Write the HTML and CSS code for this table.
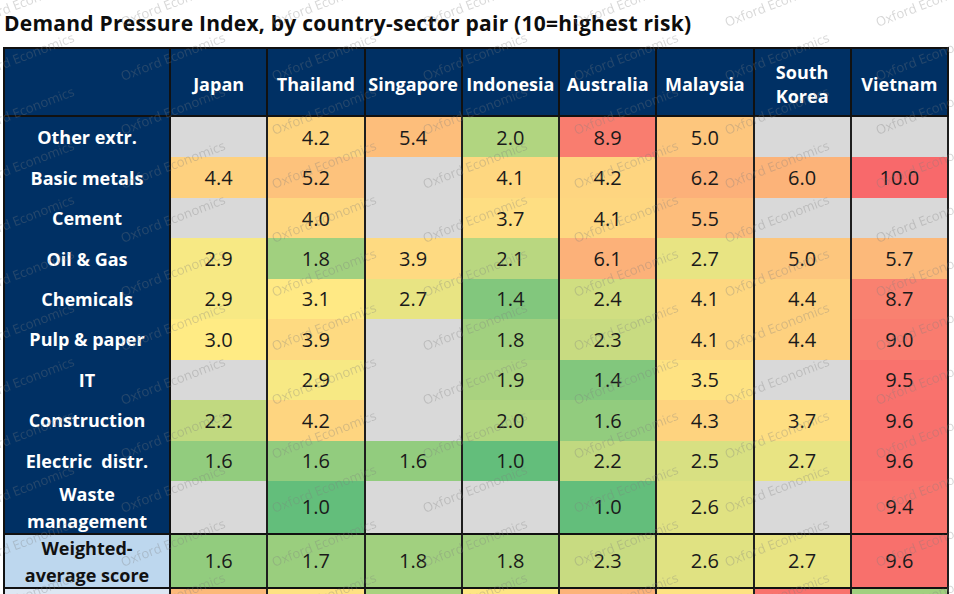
FILE: index.html
```html
<!DOCTYPE html>
<html lang="en">
<head>
<meta charset="utf-8">
<title>Demand Pressure Index</title>
<link rel="stylesheet" href="styles.css">
</head>
<body>
<div class="page">
  <h1 class="title">Demand Pressure Index, by country-sector pair (10=highest risk)</h1>
  <div class="grid">
    <div class="c hd"></div>
    <div class="c hd">Japan</div>
    <div class="c hd">Thailand</div>
    <div class="c hd">Singapore</div>
    <div class="c hd">Indonesia</div>
    <div class="c hd">Australia</div>
    <div class="c hd">Malaysia</div>
    <div class="c hd">South Korea</div>
    <div class="c hd">Vietnam</div>

    <div class="c lab">Other extr.</div>
    <div class="c v na"></div>
    <div class="c v" style="background:#fed580">4.2</div>
    <div class="c v" style="background:#fdbe7b">5.4</div>
    <div class="c v" style="background:#b1d580">2.0</div>
    <div class="c v" style="background:#f97d6f">8.9</div>
    <div class="c v" style="background:#fdc67d">5.0</div>
    <div class="c v na"></div>
    <div class="c v na"></div>

    <div class="c lab">Basic metals</div>
    <div class="c v" style="background:#fed17f">4.4</div>
    <div class="c v" style="background:#fdc27c">5.2</div>
    <div class="c v na"></div>
    <div class="c v" style="background:#fed780">4.1</div>
    <div class="c v" style="background:#fed580">4.2</div>
    <div class="c v" style="background:#fcb079">6.2</div>
    <div class="c v" style="background:#fcb379">6.0</div>
    <div class="c v" style="background:#f8696b">10.0</div>

    <div class="c lab">Cement</div>
    <div class="c v na"></div>
    <div class="c v" style="background:#fed880">4.0</div>
    <div class="c v na"></div>
    <div class="c v" style="background:#fede82">3.7</div>
    <div class="c v" style="background:#fed780">4.1</div>
    <div class="c v" style="background:#fdbd7b">5.5</div>
    <div class="c v na"></div>
    <div class="c v na"></div>

    <div class="c lab">Oil &amp; Gas</div>
    <div class="c v" style="background:#f7e984">2.9</div>
    <div class="c v" style="background:#a1d07f">1.8</div>
    <div class="c v" style="background:#feda81">3.9</div>
    <div class="c v" style="background:#b9d780">2.1</div>
    <div class="c v" style="background:#fcb179">6.1</div>
    <div class="c v" style="background:#e8e483">2.7</div>
    <div class="c v" style="background:#fdc67d">5.0</div>
    <div class="c v" style="background:#fcb97a">5.7</div>

    <div class="c lab">Chemicals</div>
    <div class="c v" style="background:#f7e984">2.9</div>
    <div class="c v" style="background:#ffe984">3.1</div>
    <div class="c v" style="background:#e8e483">2.7</div>
    <div class="c v" style="background:#82c77d">1.4</div>
    <div class="c v" style="background:#d0de81">2.4</div>
    <div class="c v" style="background:#fed780">4.1</div>
    <div class="c v" style="background:#fed17f">4.4</div>
    <div class="c v" style="background:#f98170">8.7</div>

    <div class="c lab">Pulp &amp; paper</div>
    <div class="c v" style="background:#ffeb84">3.0</div>
    <div class="c v" style="background:#feda81">3.9</div>
    <div class="c v na"></div>
    <div class="c v" style="background:#a1d07f">1.8</div>
    <div class="c v" style="background:#c8db81">2.3</div>
    <div class="c v" style="background:#fed780">4.1</div>
    <div class="c v" style="background:#fed17f">4.4</div>
    <div class="c v" style="background:#f97c6f">9.0</div>

    <div class="c lab">IT</div>
    <div class="c v na"></div>
    <div class="c v" style="background:#f7e984">2.9</div>
    <div class="c v na"></div>
    <div class="c v" style="background:#a9d27f">1.9</div>
    <div class="c v" style="background:#82c77d">1.4</div>
    <div class="c v" style="background:#fee282">3.5</div>
    <div class="c v na"></div>
    <div class="c v" style="background:#f9726d">9.5</div>

    <div class="c lab">Construction</div>
    <div class="c v" style="background:#c1d980">2.2</div>
    <div class="c v" style="background:#fed580">4.2</div>
    <div class="c v na"></div>
    <div class="c v" style="background:#b1d580">2.0</div>
    <div class="c v" style="background:#92cc7e">1.6</div>
    <div class="c v" style="background:#fed37f">4.3</div>
    <div class="c v" style="background:#fede82">3.7</div>
    <div class="c v" style="background:#f8706c">9.6</div>

    <div class="c lab">Electric&nbsp; distr.</div>
    <div class="c v" style="background:#92cc7e">1.6</div>
    <div class="c v" style="background:#92cc7e">1.6</div>
    <div class="c v" style="background:#92cc7e">1.6</div>
    <div class="c v" style="background:#63be7b">1.0</div>
    <div class="c v" style="background:#c1d980">2.2</div>
    <div class="c v" style="background:#d8e082">2.5</div>
    <div class="c v" style="background:#e8e483">2.7</div>
    <div class="c v" style="background:#f8706c">9.6</div>

    <div class="c lab two">Waste management</div>
    <div class="c v na"></div>
    <div class="c v" style="background:#63be7b">1.0</div>
    <div class="c v na"></div>
    <div class="c v na"></div>
    <div class="c v" style="background:#63be7b">1.0</div>
    <div class="c v" style="background:#e0e282">2.6</div>
    <div class="c v na"></div>
    <div class="c v" style="background:#f9746d">9.4</div>

    <div class="c lab two wlab sep">Weighted-average score</div>
    <div class="c v sep" style="background:#92cc7e">1.6</div>
    <div class="c v sep" style="background:#9ace7e">1.7</div>
    <div class="c v sep" style="background:#a1d07f">1.8</div>
    <div class="c v sep" style="background:#a1d07f">1.8</div>
    <div class="c v sep" style="background:#c8db81">2.3</div>
    <div class="c v sep" style="background:#e0e282">2.6</div>
    <div class="c v sep" style="background:#e8e483">2.7</div>
    <div class="c v sep" style="background:#f8706c">9.6</div>

    <div class="c lab nextlab sep"></div>
    <div class="c v sep" style="background:#fcb97a"></div>
    <div class="c v sep" style="background:#fee282"></div>
    <div class="c v sep" style="background:#a9d27f"></div>
    <div class="c v sep" style="background:#fee683"></div>
    <div class="c v sep" style="background:#fcb379"></div>
    <div class="c v sep" style="background:#fee282"></div>
    <div class="c v sep" style="background:#f9726d"></div>
    <div class="c v sep" style="background:#a1d07f"></div>
  </div>

  <svg class="wm" width="954" height="594" viewBox="0 0 954 594" aria-hidden="true">
    <defs>
      <pattern id="wmtile" width="151" height="54" patternUnits="userSpaceOnUse">
        <g class="wmtext">
          <text x="123" y="27" transform="rotate(-21 123 27)">Oxford Economics</text>
          <text x="123" y="81" transform="rotate(-21 123 81)">Oxford Economics</text>
          <text x="-28" y="27" transform="rotate(-21 -28 27)">Oxford Economics</text>
          <text x="-28" y="81" transform="rotate(-21 -28 81)">Oxford Economics</text>
        </g>
      </pattern>
    </defs>
    <rect width="954" height="594" fill="url(#wmtile)"/>
  </svg>
</div>
</body>
</html>
```

FILE: styles.css
```css
html, body {
  margin: 0;
  padding: 0;
}

body {
  background: #ffffff;
  font-family: "Open Sans", "Liberation Sans", sans-serif;
  overflow: hidden;
}

.page {
  position: relative;
  width: 954px;
  height: 594px;
  box-sizing: border-box;
  padding: 11px 0 0 3px;
  overflow: hidden;
}

.title {
  margin: 0 0 11px 1px;
  font-size: 21px;
  line-height: 25px;
  font-weight: 700;
  color: #0d0d0d;
  letter-spacing: 0.25px;
}

.grid {
  display: grid;
  grid-template-columns: 166px repeat(8, 97.25px);
  grid-template-rows: 68px repeat(9, 40.44px) 52px 54px 7px;
  border-left: 2px solid #111111;
  border-top: 2px solid #111111;
  width: max-content;
}

.c {
  box-sizing: border-box;
  border-right: 2px solid #1e1e1e;
  display: flex;
  align-items: center;
  justify-content: center;
  text-align: center;
  min-width: 0;
}

.hd {
  background: #003064;
  color: #ffffff;
  font-weight: 700;
  font-size: 18px;
  line-height: 24px;
  padding: 4px 2px 0;
  border-right-color: #111111;
  border-bottom: 2px solid #111111;
}

.lab {
  background: #003064;
  color: #ffffff;
  font-weight: 700;
  font-size: 18px;
  line-height: 24px;
  padding: 0 6px;
  border-right-color: #111111;
}

.lab.two {
  line-height: 27px;
  padding-top: 2px;
}

.wlab {
  background: #bdd7ee;
  color: #111111;
}

.nextlab {
  background: #dde7f3;
}

.v {
  font-size: 20px;
  line-height: 24px;
  color: #1a1a1a;
  padding-top: 1px;
}

.na {
  background: #d9d9d9;
}

.sep {
  border-top: 2px solid #111111;
}

.wm {
  position: absolute;
  top: 0;
  left: 0;
  pointer-events: none;
}

.wmtext {
  font-family: "Open Sans", "Liberation Sans", sans-serif;
  font-size: 13px;
  fill: #7a7a7a;
  fill-opacity: 0.3;
}
```
